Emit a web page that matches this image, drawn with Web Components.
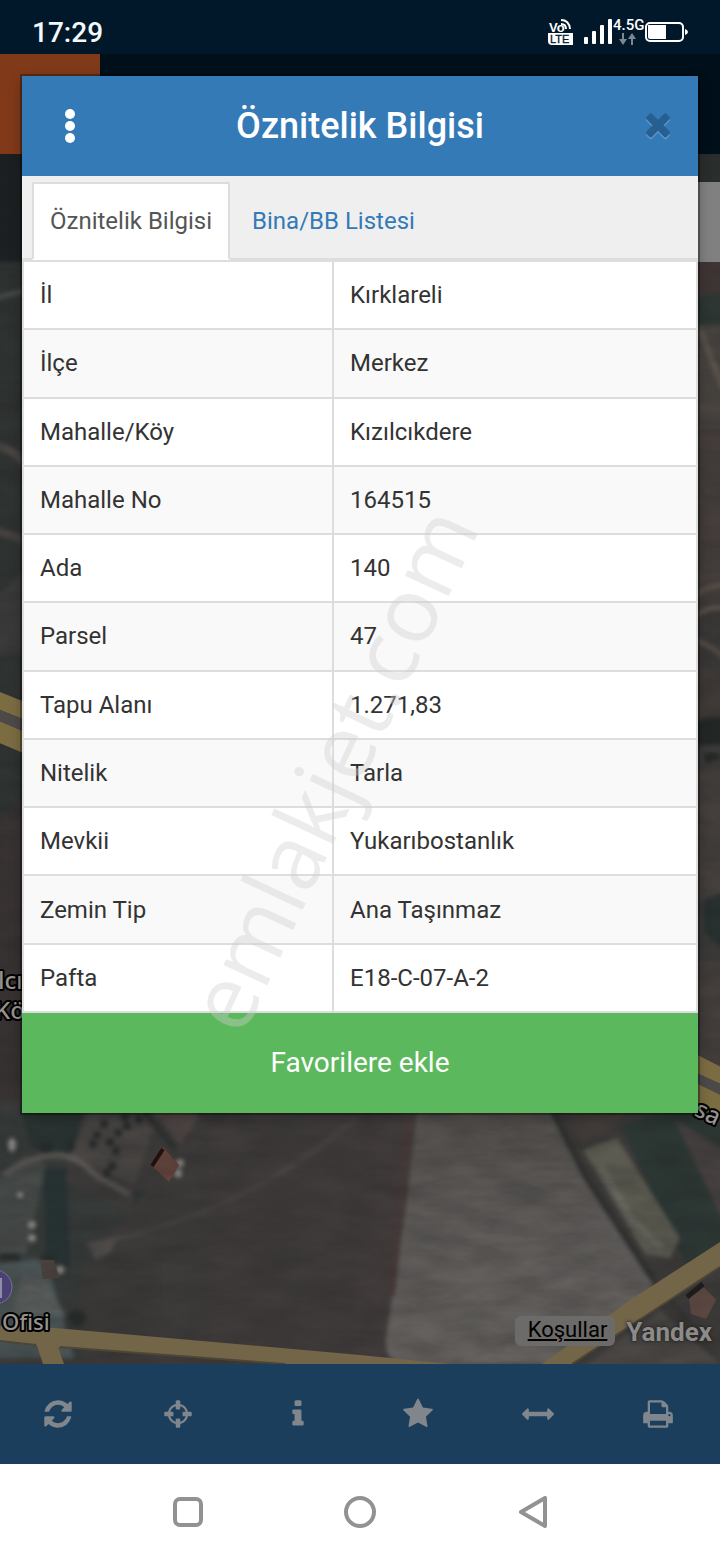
<!DOCTYPE html>
<html lang="tr">
<head>
<meta charset="utf-8">
<meta name="viewport" content="width=device-width, initial-scale=1">
<title>Öznitelik Bilgisi</title>
<style>
  html, body { margin: 0; }
  body { font-family: Roboto, "Noto Sans", sans-serif; background: #fff; }
</style>
</head>
<body>
<parcel-app></parcel-app>

<template id="status-bar-t">
  <style>
    :host { display: flex; align-items: center; justify-content: space-between; height: 54px; padding: 12px 32px 0; box-sizing: border-box; background: #00182a; color: #f4f8fb; }
    time { font-size: 28px; line-height: 32px; font-weight: 500; }
    svg { display: block; }
  </style>
  <time>17:29</time>
  <svg width="140" height="30" viewBox="548 18 140 30" fill="#fff" aria-label="Bağlantı ve pil durumu">
    <text x="549" y="32" font-family="Liberation Sans" font-size="13" font-weight="700">Vo</text>
    <path d="M561 20q8 0 9 9M561 24q5 0 5 5" fill="none" stroke="#fff" stroke-width="2"/>
    <path d="M548 33h25v12h-21q-4 0-4-4z"/>
    <text x="550" y="43" font-family="Liberation Sans" font-size="11" font-weight="400" stroke="#00182a" stroke-width=".3" fill="#00182a">LTE</text>
    <rect x="584" y="37" width="4" height="7" rx="1"/><rect x="592" y="31" width="4" height="13" rx="1"/>
    <rect x="600" y="25" width="4" height="19" rx="1"/><rect x="608" y="19" width="4" height="25" rx="1"/>
    <text x="613" y="30" font-family="Roboto" font-size="15" font-weight="500">4.5G</text>
    <path d="M622 33h2v6h3l-4 6-4-6h3zM631 45h2v-6h3l-4-6-4 6h3z" fill="#7c8894"/>
    <rect x="646" y="23" width="37" height="18" rx="4" fill="none" stroke="#fff" stroke-width="2"/>
    <path d="M648 25h18v14h-16q-2 0-2-2z"/><path d="M685 29q3 1 3 3t-3 3z"/>
  </svg>
</template>

<template id="map-view-t">
  <style>
    :host { display: flex; position: relative; overflow: hidden; align-items: flex-end; justify-content: flex-end; gap: 11px; padding: 0 8px 18px; box-sizing: border-box; background: #3d3b39; }
    svg { position: absolute; inset: 0; width: 100%; height: 100%; }
    a { position: relative; color: #000; }
    .terms { padding: 0 8px 2px 13px; border-radius: 6px; background: #6d6b69; font-size: 22px; line-height: 28px; }
    .logo { color: #8c8b89; font-size: 26px; line-height: 28px; font-weight: 700; text-decoration: none; text-shadow: 0 0 2px #222, 0 0 4px #222; }
  </style>
  <svg viewBox="0 154 720 1210" preserveAspectRatio="xMidYMax slice" aria-hidden="true">
    <defs>
      <filter id="soft" x="-5%" y="-5%" width="110%" height="110%" color-interpolation-filters="sRGB"><feGaussianBlur stdDeviation="2"/></filter>
      <filter id="grain" x="0" y="0" width="100%" height="100%" color-interpolation-filters="sRGB">
        <feTurbulence type="fractalNoise" baseFrequency=".02 .06" numOctaves="4" seed="7"/>
        <feColorMatrix values="0 0 0 0 .12  0 0 0 0 .12  0 0 0 0 .12  .9 .6 0 0 -.5"/>
      </filter>
      <linearGradient id="pale" x1="0" y1="0" x2="0" y2="1"><stop offset="0" stop-color="#524f4c"/><stop offset=".5" stop-color="#605d5b"/><stop offset="1" stop-color="#65625f"/></linearGradient>
      <linearGradient id="soil" x1="0" y1="0" x2="1" y2="0"><stop offset="0" stop-color="#3b3a39"/><stop offset="1" stop-color="#423c3c"/></linearGradient>
    </defs>
    <g filter="url(#soft)">
      <path d="M-9 150h60v112H-9z" fill="#1c2022"/>
      <path d="M-9 262h60v640H-9z" fill="#303433"/>
      <path d="M-5 298l35-8" stroke="#4d5150" stroke-width="4"/>
      <path d="M-5 445q20 4 35 25M-5 530l35 12" stroke="#4b4744" stroke-width="8" fill="none"/>
      <path d="M-9 600l40-35v90H-9z" fill="#3c3b3b"/>
      <path d="M-9 830l40-40v330H-9z" fill="#393433"/>
      <path d="M690 150h40v120h-40z" fill="#2b2f2d"/>
      <path d="M690 255h40v75h-40z" fill="#413836"/>
      <path d="M690 300l40-10v40h-40z" fill="#2e3835"/>
      <path d="M690 325h40v220h-40z" fill="#4a4541"/>
      <path d="M700 330l24 60" stroke="#625951" stroke-width="6"/>
      <path d="M690 430h40v170h-40z" fill="#453e3c"/>
      <path d="M690 600q15-15 40-16M690 620q15-15 40-12M690 640q15 0 40 22" stroke="#64584f" stroke-width="4" fill="none"/>
      <path d="M690 660l40 20v50h-40z" fill="#413b39"/>
      <path d="M690 730q15-20 40-10v25h-40zM704 754q8-4 20 2l-18 8z" fill="#232927"/>
      <path d="M690 770h40v130h-40z" fill="#45403e"/>
      <path d="M704 900l20-8v60l-20-20z" fill="#283230"/>
      <path d="M690 960h40v120h-40z" fill="#443f3d"/>

      <path d="M-9 1100h740v280H-9z" fill="#3d3b3a"/>
      <path d="M-9 1110h85l-10 70 75 40-60 140H-9z" fill="#363a39"/>
      <path d="M20 1108h65l-13 46-40-6z" fill="#2a3432"/>
      <path d="M90 1110h70l-25 75-65-30z" fill="#484543"/>
      <path d="M154 1110h40l42 60q4 20-25 18z" fill="#4f4644"/>
      <path d="M143 1110l66 80 15 2" stroke="#2f3230" stroke-width="7" fill="none"/>
      <path d="M135 1190l55-5 18 8-48 35-30-2z" fill="#2e3636"/>
      <path d="M-9 1180l35-25 20 10-20 90H-9z" fill="#464a49"/>
      <path d="M5 1175q55-40 90 0l35 20" stroke="#5a5754" stroke-width="6" fill="none"/>
      <path d="M44 1170l22-2 4 100-24-10z" fill="#273333"/>
      <path d="M205 1110h215l-36 250-300-30q-20-60 40-110z" fill="url(#soil)"/>
      <path d="M110 1240q140-30 250-125" stroke="#464341" stroke-width="5" fill="none"/>
      <path d="M86 1243q20-4 32-6l-8 16-14 8z" fill="#504c4a"/>
      <path d="M417 1110h135l30 62 75 113-95 80H400q-16-6-14-28l20-130z" fill="url(#pale)"/>
      <path d="M409 1110l-8 90-10 95" stroke="#463b3a" stroke-width="8" fill="none"/>
      <path d="M553 1112l33 65 68 104 40 50" stroke="#2f312e" stroke-width="6" fill="none"/>
      <path d="M562 1105h80l-60 40z" fill="#453f3c"/>
      <path d="M620 1126l50-16h60v150l-42 8z" fill="#2d3835"/>
      <path d="M675 1120l50 30v75z" fill="#464040"/>
      <path d="M583 1150l34-12 63 100-10 20-25-4z" fill="#5c5b51"/>
      <path d="M600 1165l32 55 30 28" stroke="#66675e" stroke-width="7" fill="none"/>
      <path d="M654 1281l70 85h-90z" fill="#3a3938"/>
      <path d="M580 1370l80-60 60 54z" fill="#4a4744"/>
      <path d="M-9 1264l55-6 28 100H-9z" fill="#4b5556"/>
      <path d="M22 1275l24 6 20 35H12z" fill="#5a5e5d"/>
    </g>
    <g fill="#262b2a" filter="url(#soft)">
      <circle cx="104" cy="1124" r="4"/><circle cx="125" cy="1117" r="4"/><circle cx="139" cy="1119" r="4"/><circle cx="118" cy="1133" r="4"/><circle cx="97" cy="1135" r="4"/><circle cx="110" cy="1142" r="4"/><circle cx="116" cy="1151" r="4"/><circle cx="93" cy="1144" r="4"/><circle cx="127" cy="1126" r="4"/><circle cx="112" cy="1166" r="4"/><circle cx="107" cy="1173" r="4"/><circle cx="70" cy="1146" r="4"/><ellipse cx="46" cy="1147" rx="7" ry="5"/><ellipse cx="77" cy="1318" rx="9" ry="8"/><path d="M0 1254h20v6H0zM40 1255h14v6H40z"/>
    </g>
    <g fill="#92918d" filter="url(#soft)"><ellipse cx="12" cy="1145" rx="4" ry="7"/><circle cx="20" cy="1195" r="3"/><circle cx="32" cy="1225" r="4"/><circle cx="32" cy="1238" r="4"/><circle cx="180" cy="1163" r="4"/><circle cx="178" cy="1173" r="4"/><circle cx="60" cy="1270" r="4"/></g>
    <path d="M152 1166l11-19 16 18-10 17z" fill="#64443d"/><path d="M152 1166l11-17" stroke="#260d0d" stroke-width="4"/>
    <path d="M689 1298l15-11 12 13-10 19-15-5z" fill="#604a43"/><path d="M687 1297l16-13" stroke="#1d1c1c" stroke-width="5"/>
    <path d="M40 1260h14l5 18-16 1z" fill="#4c4340"/>
    <rect y="154" width="720" height="1210" filter="url(#grain)" opacity=".4"/>
    <g fill="#736548">
      <path d="M0 1326l55 2 305 27 90 9H285L55 1347 0 1341z"/>
      <path d="M36 1343l22 4 6 17H43z"/>
      <path d="M720 1242v25l-148 97h-30q70-50 82-60z"/>
    </g>
    <path d="M0 1341l36 4M60 1347l225 17M720 1267l-148 97" stroke="#4d4636" stroke-width="2"/>
    <path d="M-5 690l40 16v18l-40-16zM-5 719l40 17v22l-40-17z" fill="#7b6c42"/>
    <path d="M-5 708l40 16v12l-40-17z" fill="#4b4a49"/>
    <path d="M690 1051l35 18v17l-35-16zM690 1080l35 17v24l-35-19z" fill="#7b6c42"/>
    <path d="M690 1070l35 16v11l-35-17z" fill="#4b4a49"/>
    <path d="M698 182h22v80h-22z" fill="#808080"/>
    <circle cx="-5" cy="1287" r="17" fill="#4a4177" stroke="#77718f" stroke-width="1"/>
    <path d="M0 1278h2v20H0z" fill="#918da5"/>
    <g fill="#96928e" stroke="#000" stroke-width="4" stroke-linejoin="round" paint-order="stroke" font-family="Noto Sans" font-weight="500" font-size="24">
      <text x="-2" y="989">lcı</text>
      <text x="-5" y="1019">Kö</text>
      <text x="2" y="1330" font-size="22">Ofisi</text>
      <text transform="translate(693 1115) rotate(25)">sa</text>
    </g>
  </svg>
  <a class="terms" href="#kosullar">Koşullar</a>
  <a class="logo" href="#yandex">Yandex</a>
</template>

<template id="tool-bar-t">
  <style>
    :host { display: grid; grid-template-columns: repeat(6, 1fr); height: 100px; background: #1b3e5c; }
    button { display: grid; place-items: center; border: 0; padding: 0 4px 0 0; background: none; }
    svg { width: 32px; height: 32px; fill: #80868b; }
  </style>
  <button aria-label="Yenile"><svg viewBox="0 0 1792 1792"><path d="M1639 1056q0 5-1 7-64 268-268 434.500t-478 166.500q-146 0-282.500-55t-243.500-157l-129 129q-19 19-45 19t-45-19-19-45v-448q0-26 19-45t45-19h448q26 0 45 19t19 45-19 45l-137 137q71 66 161 102t187 36q134 0 250-65t186-179q11-17 53-117 8-23 30-23h192q13 0 22.500 9.500t9.500 22.500zm25-800v448q0 26-19 45t-45 19h-448q-26 0-45-19t-19-45 19-45l138-138q-148-137-349-137-134 0-250 65t-186 179q-11 17-53 117-8 23-30 23h-199q-13 0-22.500-9.500t-9.500-22.500v-7q65-268 270-434.500t480-166.500q146 0 284 55.500t245 156.500l130-129q19-19 45-19t45 19 19 45z"/></svg></button>
  <button aria-label="Konum"><svg viewBox="0 0 1792 1792"><path d="M1325 1024h-109q-26 0-45-19t-19-45v-128q0-26 19-45t45-19h109q-32-108-112.500-188.500t-188.500-112.500v109q0 26-19 45t-45 19h-128q-26 0-45-19t-19-45v-109q-108 32-188.500 112.500t-112.500 188.500h109q26 0 45 19t19 45v128q0 26-19 45t-45 19h-109q32 108 112.500 188.500t188.500 112.500v-109q0-26 19-45t45-19h128q26 0 45 19t19 45v109q108-32 188.500-112.500t112.500-188.500zm339-192v128q0 26-19 45t-45 19h-143q-37 161-154.500 278.500t-278.500 154.500v143q0 26-19 45t-45 19h-128q-26 0-45-19t-19-45v-143q-161-37-278.500-154.500t-154.500-278.500h-143q-26 0-45-19t-19-45v-128q0-26 19-45t45-19h143q37-161 154.500-278.500t278.500-154.500v-143q0-26 19-45t45-19h128q26 0 45 19t19 45v143q161 37 278.500 154.500t154.500 278.500h143q26 0 45 19t19 45z"/></svg></button>
  <button aria-label="Bilgi"><svg viewBox="0 0 1792 1792"><path d="M1216 1344v128q0 26-19 45t-45 19h-512q-26 0-45-19t-19-45v-128q0-26 19-45t45-19h64v-384h-64q-26 0-45-19t-19-45v-128q0-26 19-45t45-19h384q26 0 45 19t19 45v576h64q26 0 45 19t19 45zm-128-1152v192q0 26-19 45t-45 19h-256q-26 0-45-19t-19-45v-192q0-26 19-45t45-19h256q26 0 45 19t19 45z"/></svg></button>
  <button aria-label="Favoriler"><svg viewBox="0 0 1792 1792"><path d="M1728 647q0 22-26 48l-363 354 86 500q1 7 1 20 0 21-10.500 35.500t-30.500 14.500q-19 0-40-12l-449-236-449 236q-22 12-40 12-21 0-31.500-14.500t-10.500-35.500q0-6 2-20l86-500-364-354q-25-27-25-48 0-37 56-46l502-73 225-455q19-41 49-41t49 41l225 455 502 73q56 9 56 46z"/></svg></button>
  <button aria-label="Ölçüm"><svg viewBox="0 0 1792 1792"><path d="M1792 896q0 26-19 45l-256 256q-19 19-45 19t-45-19-19-45v-128h-1024v128q0 26-19 45t-45 19-45-19l-256-256q-19-19-19-45t19-45l256-256q19-19 45-19t45 19 19 45v128h1024v-128q0-26 19-45t45-19 45 19l256 256q19 19 19 45z"/></svg></button>
  <button aria-label="Yazdır"><svg viewBox="0 0 1792 1792"><path d="M448 1536h896v-256h-896v256zm0-640h896v-384h-160q-40 0-68-28t-28-68v-160h-640v640zm1152 64q0-26-19-45t-45-19-45 19-19 45 19 45 45 19 45-19 19-45zm128 0v416q0 13-9.500 22.500t-22.500 9.500h-224v160q0 40-28 68t-68 28h-960q-40 0-68-28t-28-68v-160h-224q-13 0-22.500-9.500t-9.500-22.500v-416q0-79 56.500-135.500t135.500-56.500h64v-544q0-40 28-68t68-28h672q40 0 88 20t76 48l152 152q28 28 48 76t20 88v256h64q79 0 135.500 56.500t56.500 135.500z"/></svg></button>
</template>

<template id="system-nav-t">
  <style>
    :host { display: flex; align-items: center; justify-content: center; gap: 140px; height: 96px; background: #fff; }
    button { border: 0; padding: 0; background: none; }
    svg { display: block; width: 32px; height: 32px; fill: none; stroke: #929292; stroke-width: 4; stroke-linejoin: round; }
  </style>
  <button aria-label="Son uygulamalar"><svg viewBox="0 0 32 32"><rect x="3" y="3" width="26" height="26" rx="5"/></svg></button>
  <button aria-label="Ana ekran"><svg viewBox="0 0 32 32"><circle cx="16" cy="16" r="14"/></svg></button>
  <button aria-label="Geri"><svg viewBox="0 0 32 32"><path d="M29 2v28L5 16z"/></svg></button>
</template>

<template id="info-table-t">
  <style>
    :host { display: block; background: #fff; }
    table { width: 100%; height: 753px; table-layout: fixed; border-collapse: collapse; font-size: 24px; line-height: 32px; color: #333; }
    .name { width: 46%; }
    th, td { border: 2px solid #ddd; padding: 0 16px; font-weight: 400; text-align: left; }
    tr:nth-child(even) { background: #f9f9f9; }
  </style>
  <table><colgroup><col class="name"><col></colgroup><tbody></tbody></table>
</template>

<template id="info-dialog-t">
  <style>
    :host { display: block; box-shadow: 0 0 0 2px rgba(0,0,0,.3), 0 4px 12px rgba(0,0,0,.3); }
    header { display: grid; grid-template-columns: 96px 1fr 96px; align-items: center; height: 100px; background: #337ab7; color: #fff; }
    h1 { margin: 0; font-size: 36px; line-height: 40px; font-weight: 500; text-align: center; }
    header button { display: grid; place-items: center; border: 0; padding: 0; height: 100%; background: none; }
    .close { padding-left: 16px; }
    .dots { width: 12px; height: 36px; fill: #fff; }
    .cross { width: 36px; height: 36px; fill: #275f91; filter: drop-shadow(0 2px 0 #5b95c8); }
    nav { display: flex; gap: 4px; padding: 6px 10px 0; background: #efefef; box-shadow: inset 0 -2px #ddd; }
    nav button { box-sizing: border-box; height: 78px; padding: 0 16px; border: 2px solid transparent; background: none; font: 24px/32px Roboto, sans-serif; color: #337ab7; }
    nav button[aria-selected=true] { border-color: #ddd #ddd #fff; border-radius: 2px 2px 0 0; background: #fff; color: #555; }
    .add { display: block; width: 100%; height: 100px; border: 0; padding: 0; background: #5cb85c; color: #fff; font: 28px/36px Roboto, sans-serif; }
  </style>
  <header>
    <button aria-label="Menü"><svg class="dots" viewBox="0 0 12 36"><circle cx="6" cy="6" r="5"/><circle cx="6" cy="18" r="5"/><circle cx="6" cy="30" r="5"/></svg></button>
    <h1><slot name="title"></slot></h1>
    <button class="close" aria-label="Kapat"><svg class="cross" viewBox="0 100 1792 1792"><path d="M1490 1322q0 40-28 68l-136 136q-28 28-68 28t-68-28l-294-294-294 294q-28 28-68 28t-68-28l-136-136q-28-28-28-68t28-68l294-294-294-294q-28-28-28-68t28-68l136-136q28-28 68-28t68 28l294 294 294-294q28-28 68-28t68 28l136 136q28 28 28 68t-28 68l-294 294 294 294q28 28 28 68z"/></svg></button>
  </header>
  <nav role="tablist">
    <button role="tab" aria-selected="true">Öznitelik Bilgisi</button>
    <button role="tab" aria-selected="false">Bina/BB Listesi</button>
  </nav>
  <slot></slot>
  <button class="add">Favorilere ekle</button>
</template>

<template id="parcel-app-t">
  <style>
    :host { display: flex; flex-direction: column; min-height: 100vh; }
    main { position: relative; flex: 1; display: flex; flex-direction: column; min-height: 1140px; }
    .brand { height: 100px; background: linear-gradient(90deg, #803a1a 100px, #000f1a 100px); }
    map-view { flex: 1; }
    info-dialog { position: absolute; top: 22px; left: 22px; right: 22px; }
    .mark { position: absolute; left: 50%; top: 658px; width: 640px; margin-left: -350px; text-align: center; font: 90px/112px "Open Sans", sans-serif; color: rgba(208,208,208,.4); transform: rotate(-65deg); pointer-events: none; }
  </style>
  <status-bar></status-bar>
  <main>
    <div class="brand"></div>
    <map-view></map-view>
    <tool-bar></tool-bar>
    <info-dialog><span slot="title">Öznitelik Bilgisi</span><info-table></info-table></info-dialog>
    <div class="mark">emlakjet.com</div>
  </main>
  <system-nav></system-nav>
</template>

<script>
  const rows = [
    ["İl", "Kırklareli"], ["İlçe", "Merkez"], ["Mahalle/Köy", "Kızılcıkdere"],
    ["Mahalle No", "164515"], ["Ada", "140"], ["Parsel", "47"],
    ["Tapu Alanı", "1.271,83"], ["Nitelik", "Tarla"], ["Mevkii", "Yukarıbostanlık"],
    ["Zemin Tip", "Ana Taşınmaz"], ["Pafta", "E18-C-07-A-2"]
  ];
  class Templated extends HTMLElement {
    constructor() {
      super();
      const t = document.getElementById(this.localName + "-t");
      this.attachShadow({ mode: "open" }).append(t.content.cloneNode(true));
    }
  }
  class InfoTable extends Templated {
    connectedCallback() {
      const body = this.shadowRoot.querySelector("tbody");
      body.replaceChildren(...rows.map(([name, value]) => {
        const tr = document.createElement("tr");
        const th = document.createElement("th");
        const td = document.createElement("td");
        th.scope = "row";
        th.textContent = name;
        td.textContent = value;
        tr.append(th, td);
        return tr;
      }));
    }
  }
  customElements.define("status-bar", class extends Templated {});
  customElements.define("map-view", class extends Templated {});
  customElements.define("tool-bar", class extends Templated {});
  customElements.define("system-nav", class extends Templated {});
  customElements.define("info-table", InfoTable);
  customElements.define("info-dialog", class extends Templated {});
  customElements.define("parcel-app", class extends Templated {});
</script>
</body>
</html>
